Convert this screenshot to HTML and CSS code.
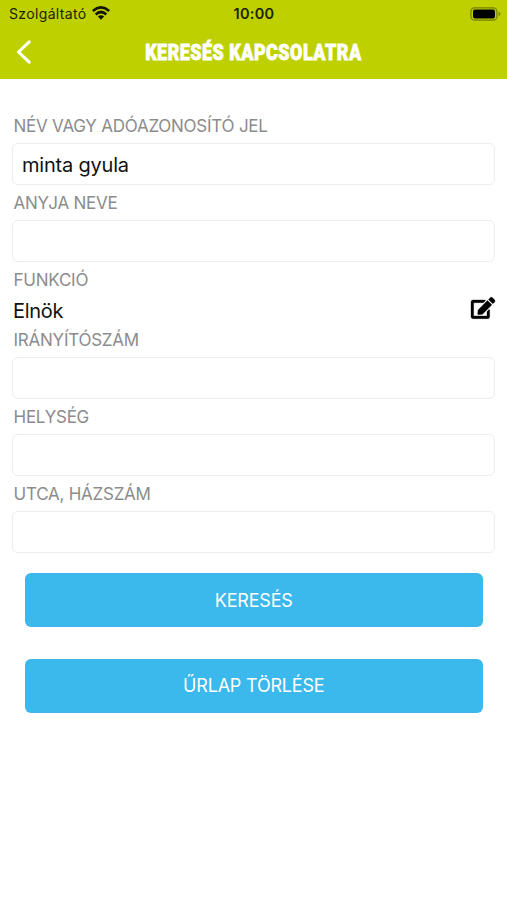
FILE: index.html
```html
<!DOCTYPE html>
<html lang="hu">
<head>
<meta charset="utf-8">
<meta name="viewport" content="width=device-width, initial-scale=1">
<title>Keresés kapcsolatra</title>
<link rel="stylesheet" href="styles.css">
</head>
<body>
<header class="header">
  <div class="status">
    <div class="carrier"><span>Szolgáltató</span>
      <svg class="wifi" viewBox="0 0 18 14" width="18" height="14"><g fill="none" stroke="#141600" stroke-width="2.7"><path d="M.8 5Q9-2.200 17.200 5"/><path d="M3.700 8.400Q9 3.600 14.300 8.400"/></g><path d="M5.800 10.500Q9 7.800 12.200 10.500L9 13.700Z" fill="#141600"/></svg>
    </div>
    <span class="time">10:00</span>
    <svg class="battery" viewBox="0 0 31 14" width="31" height="14"><rect x=".9" y=".8" width="26" height="12.400" rx="3.600" fill="none" stroke="#748000" stroke-width="1.200"/><rect x="3" y="2.600" width="22" height="8.800" rx="1.800" fill="#000"/><path d="M28.600 4.800Q30.400 5.500 30.400 7Q30.400 8.500 28.600 9.200Z" fill="#748000"/></svg>
  </div>
  <div class="nav">
    <svg class="back" viewBox="0 0 16 24" width="16" height="24"><path d="M13.200 1.800L2.500 12L13.200 22.200" fill="none" stroke="#fff" stroke-width="3" stroke-linecap="round" stroke-linejoin="round"/></svg>
    <h1 class="title">KERESÉS KAPCSOLATRA</h1>
  </div>
</header>
<main class="form">
  <label class="label" for="name"><span>NÉV VAGY ADÓAZONOSÍTÓ JEL</span></label>
  <input class="input" id="name" type="text" value="minta gyula">
  <label class="label" for="mother"><span>ANYJA NEVE</span></label>
  <input class="input" id="mother" type="text">
  <div class="label"><span>FUNKCIÓ</span></div>
  <div class="choice"><span>Elnök</span>
    <svg class="edit" viewBox="0 0 576 512" width="24" height="22"><path d="M402.600 83.200l90.200 90.200c3.800 3.800 3.800 10 0 13.800L274.400 405.600l-92.800 10.300c-12.400 1.400-22.900-9.100-21.500-21.500l10.300-92.800L388.800 83.200c3.800-3.800 10-3.800 13.800 0zm162-22.900l-48.800-48.800c-15.200-15.200-39.900-15.200-55.200 0l-35.400 35.400c-3.800 3.800-3.800 10 0 13.800l90.200 90.200c3.800 3.800 10 3.800 13.800 0l35.400-35.400c15.200-15.300 15.200-40 0-55.200zM384 346.200V448H64V128h229.800c3.200 0 6.200-1.300 8.500-3.500l40-40c7.600-7.600 2.200-20.500-8.500-20.500H48C21.500 64 0 85.500 0 112v352c0 26.500 21.500 48 48 48h352c26.500 0 48-21.500 48-48V306.200c0-10.700-12.900-16-20.500-8.500l-40 40c-2.200 2.300-3.500 5.300-3.500 8.500z"/></svg>
  </div>
  <label class="label" for="zip"><span>IRÁNYÍTÓSZÁM</span></label>
  <input class="input" id="zip" type="text">
  <label class="label" for="city"><span>HELYSÉG</span></label>
  <input class="input" id="city" type="text">
  <label class="label" for="street"><span>UTCA, HÁZSZÁM</span></label>
  <input class="input" id="street" type="text">
  <div class="actions">
    <button class="button" type="button">KERESÉS</button>
    <button class="button" type="button">ŰRLAP TÖRLÉSE</button>
  </div>
</main>
</body>
</html>
```
FILE: styles.css
```css
* { box-sizing: border-box; }
body { margin: 0; min-height: 900px; background: #fff; color: #111; font-family: Inter, "Liberation Sans", sans-serif; }
.header { height: 79px; background: #bed000; }
.status { display: grid; grid-template-columns: 1fr auto 1fr; align-items: center; height: 27px; padding: 0 6px 0 9px; color: #202300; font-size: 14px; }
.carrier { display: flex; align-items: center; gap: 5px; letter-spacing: .35px; }
.wifi { margin-top: -2px; }
.time { font-weight: 600; font-size: 14.500px; letter-spacing: .3px; transform: translateX(-1px); }
.battery { justify-self: end; }
.nav { display: grid; grid-template-columns: 40px 1fr 40px; align-items: center; height: 50px; }
.back { margin-left: 16px; }
.title { margin: 1px 0 0; justify-self: center; color: #fff; font: 900 21.500px/30px Roboto, sans-serif; letter-spacing: .65px; white-space: nowrap; transform: scaleX(.83); -webkit-text-stroke: .8px #fff; }
.form { display: flex; flex-direction: column; padding: 29px 12px 0; }
.label { display: flex; align-items: center; height: 35px; padding: 1px 1.500px 0; color: #8c8c8c; font-size: 17px; letter-spacing: -.24px; }
.input { display: block; width: 100%; height: 42px; margin: 0; padding: 2px 9px 0; border: 1px solid #ededed; border-radius: 6px; background: #fff; color: #111; font: 20px Inter, sans-serif; letter-spacing: -.2px; outline: 0; }
.choice { display: flex; align-items: center; justify-content: space-between; height: 26px; padding: 2px 0 0 1px; font-size: 20px; letter-spacing: -.3px; }
.choice + .label { height: 34px; padding-top: 0; }
.edit { margin-top: -6px; fill: #000; stroke: #000; stroke-width: 8px; overflow: visible; }
.actions { display: flex; flex-direction: column; gap: 31.500px; padding: 20px 12.500px 0 13px; }
.button { height: 54px; border: 0; border-radius: 6px; padding: 0; background: #3bb8ec; color: #fff; font: 18px Inter, sans-serif; letter-spacing: -.2px; }
```
